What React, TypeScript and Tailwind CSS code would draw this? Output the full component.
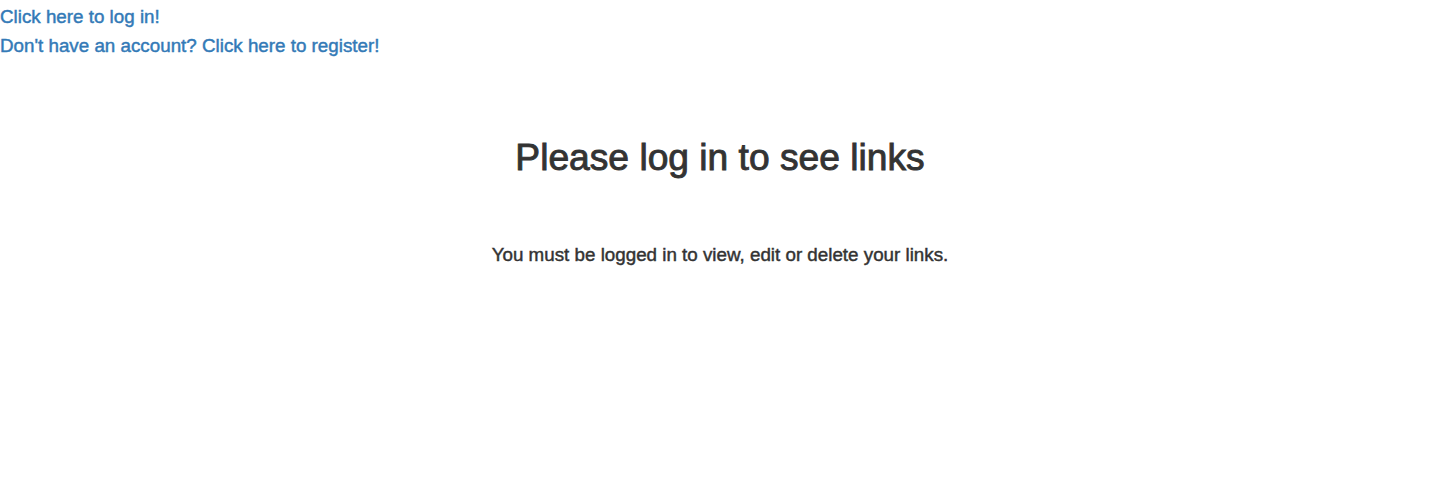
import React from "react";

const App = () => {
  return (
    <div className="min-h-[496px] bg-white font-['Liberation_Sans',Arial,sans-serif] text-[#333] [-webkit-text-stroke:0.45px_currentColor]">
      {/* AUTH LINKS */}
      <div className="flex flex-col items-start gap-[9px] pt-[7px]">
        <a href="#" className="text-[18.8px] leading-[20px] text-[#337ab7]">
          Click here to log in!
        </a>
        <a href="#" className="text-[18.8px] leading-[20px] text-[#337ab7]">
          Don't have an account? Click here to register!
        </a>
      </div>
      {/* MESSAGE */}
      <div className="flex flex-col items-center pt-[81px]">
        <h1 className="text-[37.2px] leading-[40px] [-webkit-text-stroke:0.9px_currentColor]">
          Please log in to see links
        </h1>
        <p className="mt-[66px] text-[18.8px] leading-[24px]">
          You must be logged in to view, edit or delete your links.
        </p>
      </div>
    </div>
  );
};

export default App;
